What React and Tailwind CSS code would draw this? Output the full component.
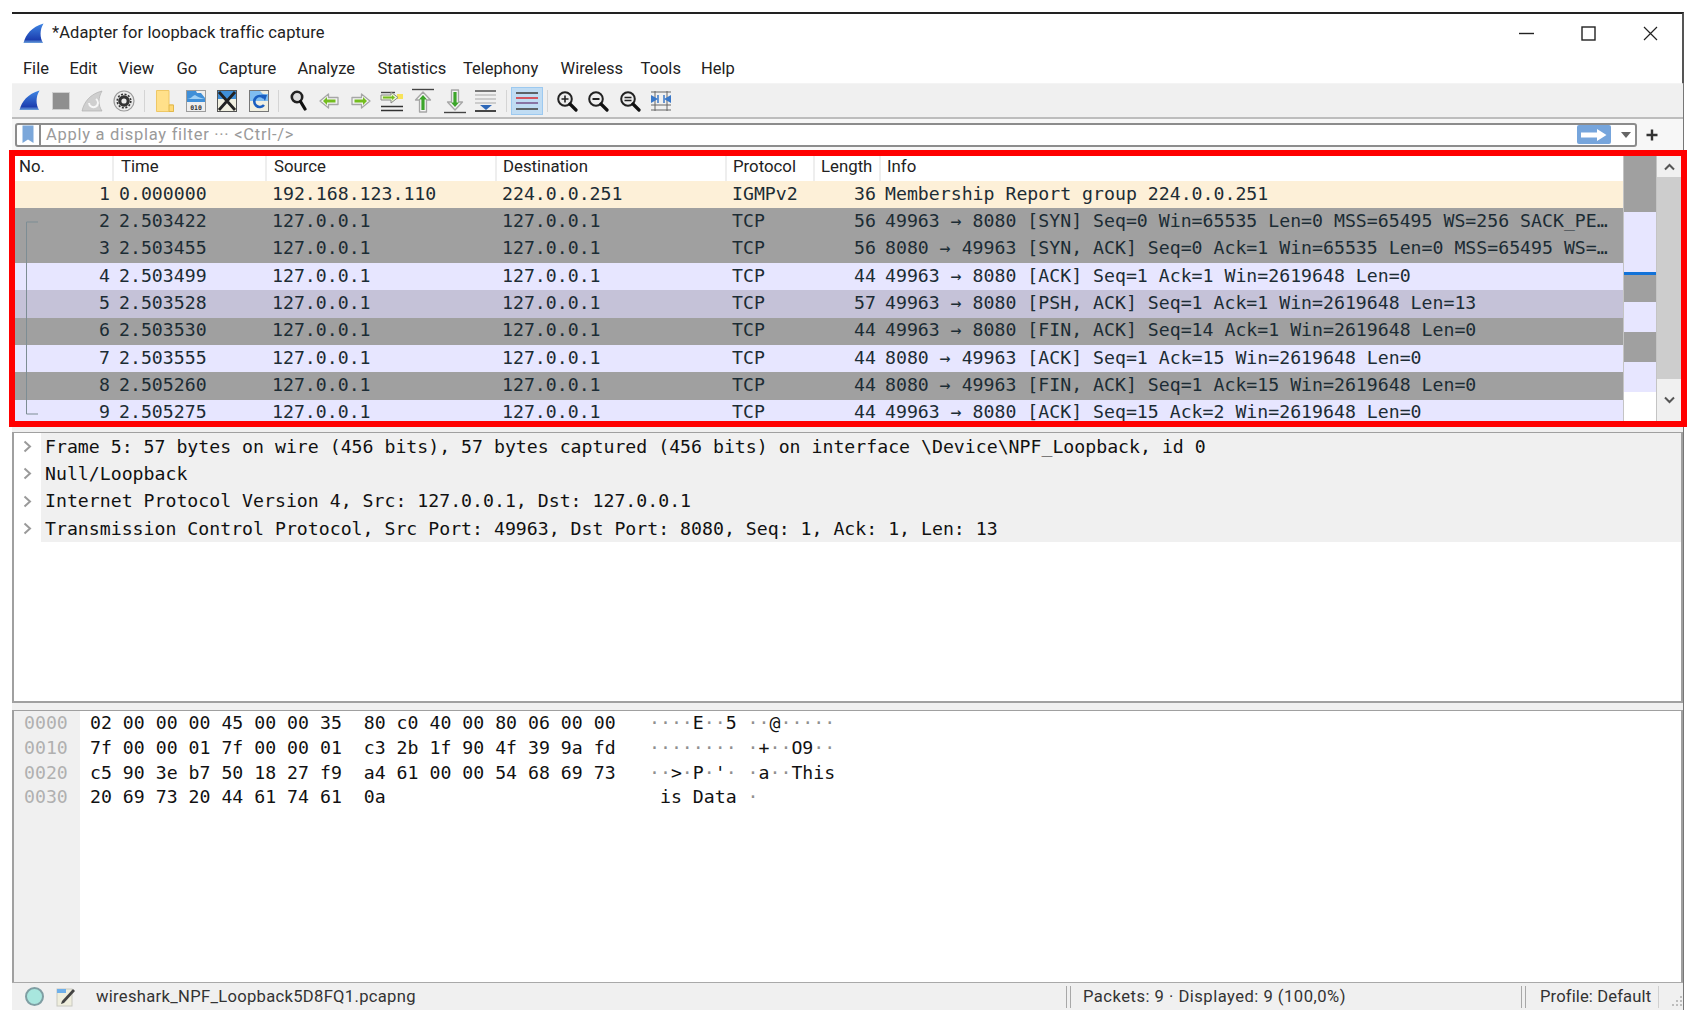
import React from "react";

const MONO = "font-['DejaVu_Sans_Mono',monospace] text-[18.2px] leading-none whitespace-pre";
const UI = "font-['Roboto',sans-serif]";

const rows = [
  ["1", "0.000000", "192.168.123.110", "224.0.0.251", "IGMPv2", "36", "Membership Report group 224.0.0.251", "bg-[#fdf0d8]"],
  ["2", "2.503422", "127.0.0.1", "127.0.0.1", "TCP", "56", "49963 → 8080 [SYN] Seq=0 Win=65535 Len=0 MSS=65495 WS=256 SACK_PE…", "bg-[#a0a0a0]"],
  ["3", "2.503455", "127.0.0.1", "127.0.0.1", "TCP", "56", "8080 → 49963 [SYN, ACK] Seq=0 Ack=1 Win=65535 Len=0 MSS=65495 WS=…", "bg-[#a0a0a0]"],
  ["4", "2.503499", "127.0.0.1", "127.0.0.1", "TCP", "44", "49963 → 8080 [ACK] Seq=1 Ack=1 Win=2619648 Len=0", "bg-[#e7e6ff]"],
  ["5", "2.503528", "127.0.0.1", "127.0.0.1", "TCP", "57", "49963 → 8080 [PSH, ACK] Seq=1 Ack=1 Win=2619648 Len=13", "bg-[#c5c2d8]"],
  ["6", "2.503530", "127.0.0.1", "127.0.0.1", "TCP", "44", "49963 → 8080 [FIN, ACK] Seq=14 Ack=1 Win=2619648 Len=0", "bg-[#a0a0a0]"],
  ["7", "2.503555", "127.0.0.1", "127.0.0.1", "TCP", "44", "8080 → 49963 [ACK] Seq=1 Ack=15 Win=2619648 Len=0", "bg-[#e7e6ff]"],
  ["8", "2.505260", "127.0.0.1", "127.0.0.1", "TCP", "44", "8080 → 49963 [FIN, ACK] Seq=1 Ack=15 Win=2619648 Len=0", "bg-[#a0a0a0]"],
  ["9", "2.505275", "127.0.0.1", "127.0.0.1", "TCP", "44", "49963 → 8080 [ACK] Seq=15 Ack=2 Win=2619648 Len=0", "bg-[#e7e6ff]"],
];

const details = [
  "Frame 5: 57 bytes on wire (456 bits), 57 bytes captured (456 bits) on interface \\Device\\NPF_Loopback, id 0",
  "Null/Loopback",
  "Internet Protocol Version 4, Src: 127.0.0.1, Dst: 127.0.0.1",
  "Transmission Control Protocol, Src Port: 49963, Dst Port: 8080, Seq: 1, Ack: 1, Len: 13",
];

const hexRows = [
  ["0000", "02 00 00 00 45 00 00 35  80 c0 40 00 80 06 00 00", "····E··5 ··@·····"],
  ["0010", "7f 00 00 01 7f 00 00 01  c3 2b 1f 90 4f 39 9a fd", "········ ·+··O9··"],
  ["0020", "c5 90 3e b7 50 18 27 f9  a4 61 00 00 54 68 69 73", "··>·P·'· ·a··This"],
  ["0030", "20 69 73 20 44 61 74 61  0a", " is Data ·"],
];

const menu = [
  ["File", "w-[46.5px]"],
  ["Edit", "w-[49px]"],
  ["View", "w-[58px]"],
  ["Go", "w-[42px]"],
  ["Capture", "w-[79px]"],
  ["Analyze", "w-[80px]"],
  ["Statistics", "w-[85.5px]"],
  ["Telephony", "w-[97.5px]"],
  ["Wireless", "w-[80px]"],
  ["Tools", "w-[60.5px]"],
  ["Help", "w-[50px]"],
];

const Fin = ({ size = 22, id }) => (
  <svg width={size} height={size} viewBox="0 0 22 22">
    <defs>
      <linearGradient id={id} x1="0" y1="0" x2="0" y2="1">
        <stop offset="0" stopColor="#3f86e4" />
        <stop offset="0.82" stopColor="#1c3fb0" />
        <stop offset="1" stopColor="#6ea4de" />
      </linearGradient>
    </defs>
    <path d="M0.5 21C3 12 9 4 21.5 0.5C17.5 7 17.5 15 21 21Z" fill={`url(#${id})`} />
  </svg>
);

const Btn = ({ children, w = "w-[31.3px]" }) => <div className={`${w} flex h-full items-center justify-center`}>{children}</div>;
const Sep = ({ w }) => (
  <div className={`${w} flex h-full items-center justify-center`}>
    <div className="h-[22px] w-px bg-[#d4d4d4]" />
  </div>
);

const Magnifier = ({ mark }) => (
  <svg width="22" height="22" viewBox="0 0 22 22">
    <circle cx="9" cy="9" r="6.8" fill="#eee" stroke="#222" strokeWidth="2" />
    <path d="M14 14L20 20" stroke="#111" strokeWidth="3.2" strokeLinecap="round" />
    {mark === "in" && <path d="M5.5 9H12.5M9 5.5V12.5" stroke="#222" strokeWidth="1.6" />}
    {mark === "out" && <path d="M5.5 9H12.5" stroke="#222" strokeWidth="2" />}
    {mark === "eq" && <path d="M5.5 7.5H12.5M5.5 10.5H12.5" stroke="#222" strokeWidth="1.5" />}
  </svg>
);

const Arrow = ({ flip }) => (
  <svg width="20" height="16" viewBox="0 0 20 16" style={flip ? { transform: "scaleX(-1)" } : undefined}>
    <path d="M1 4.5H10.5V1L19 8L10.5 15V11.5H1Z" fill="#f4f4f4" stroke="#a6a6a6" strokeWidth="1.3" strokeLinejoin="round" />
    <path d="M3.5 6.5H12V4L16 8L12 12V9.5H3.5Z" fill="#74bd1f" />
  </svg>
);

const ListIcon = () => (
  <svg width="24" height="22" viewBox="0 0 24 22">
    <path d="M1 16.5H23M1 20.5H23" stroke="#333" strokeWidth="1.5" />
    <path d="M1 2.5H15" stroke="#444" strokeWidth="1.4" />
    <path d="M17 4H23V9H17Z" fill="#f7e35a" />
    <path d="M1 5H11V2L18 7.5L11 13V10H1Z" fill="#e8f5d0" stroke="#8a8a8a" strokeWidth="1" />
    <path d="M3 6.5H12V5L15 7.5L12 10V8.5H3Z" fill="#74bd1f" />
  </svg>
);

const Vert = ({ up }) => (
  <svg width="22" height="26" viewBox="0 0 22 26">
    {up ? (
      <g>
        <path d="M0 1.5H22" stroke="#444" strokeWidth="1.4" />
        <path d="M11 4L18.5 12H14.5V24H7.5V12H3.5Z" fill="#f4f4f4" stroke="#a6a6a6" strokeWidth="1.3" strokeLinejoin="round" />
        <path d="M11 7L15 11.5H12.6V22H9.4V11.5H7Z" fill="#3ca52a" />
      </g>
    ) : (
      <g>
        <path d="M0 24.5H22" stroke="#444" strokeWidth="1.4" />
        <path d="M11 22L18.5 14H14.5V2H7.5V14H3.5Z" fill="#f4f4f4" stroke="#a6a6a6" strokeWidth="1.3" strokeLinejoin="round" />
        <path d="M11 19L15 14.5H12.6V4H9.4V14.5H7Z" fill="#3ca52a" />
      </g>
    )}
  </svg>
);

const Toolbar = () => (
  <div className="flex h-[33px] w-[1671px] items-center bg-[#f0f0f0] pl-[2px]">
    <Btn><Fin id="tb1" size={21} /></Btn>
    <Btn>
      <svg width="18" height="18" viewBox="0 0 18 18"><rect x="0.5" y="0.5" width="17" height="17" fill="#8f8f8f" stroke="#cfcfcf" /></svg>
    </Btn>
    <Btn>
      <svg width="22" height="22" viewBox="0 0 22 22">
        <path d="M1 21C3 12 9 4 21 1C17 8 17 15 21 21Z" fill="#cfcfcf" stroke="#b0b0b0" strokeWidth="0.7" />
        <path d="M15 9A4.5 4.5 0 1 1 8 13" fill="none" stroke="#f7f7f7" strokeWidth="2" />
      </svg>
    </Btn>
    <Btn>
      <svg width="22" height="22" viewBox="0 0 22 22">
        <circle cx="11" cy="11" r="10" fill="#ececec" stroke="#9a9a9a" strokeWidth="1.2" />
        <circle cx="11" cy="11" r="5.8" fill="#333" />
        <circle cx="11" cy="11" r="6.8" fill="none" stroke="#333" strokeWidth="1.6" strokeDasharray="2 1.6" />
        <circle cx="11" cy="11" r="2.6" fill="#ececec" />
      </svg>
    </Btn>
    <Sep w="w-[10px]" />
    <Btn>
      <svg width="18" height="22" viewBox="0 0 18 22">
        <path d="M0.5 0.5H13V15H17.5V21.5H0.5Z" fill="#ffe08a" stroke="#eec765" />
        <path d="M13 15H17.5V21.5H13Z" fill="#ffd976" stroke="#e0b84d" />
      </svg>
    </Btn>
    <Btn>
      <svg width="20" height="22" viewBox="0 0 20 22">
        <rect x="0.5" y="0.5" width="19" height="21" fill="#eee" stroke="#9c9c9c" />
        <path d="M1 1H10L11 3H15L19 8V12H1Z" fill="#3f8fd8" />
        <path d="M1 9C5 9 6 6 9 5C11 6 13 8 19 9" fill="#9fd0f5" />
        <text x="10" y="20" textAnchor="middle" fontFamily="'DejaVu Sans Mono',monospace" fontSize="6.5" fontWeight="700" fill="#333">010</text>
      </svg>
    </Btn>
    <Btn>
      <svg width="20" height="22" viewBox="0 0 20 22">
        <rect x="0.5" y="0.5" width="19" height="21" fill="#f0efe0" stroke="#555" />
        <path d="M1 1H19V9H1Z" fill="#3f8fd8" />
        <path d="M2 2L18 20M18 2L2 20" stroke="#222" strokeWidth="2.8" />
      </svg>
    </Btn>
    <Btn>
      <svg width="20" height="22" viewBox="0 0 20 22">
        <rect x="0.5" y="0.5" width="19" height="21" fill="#f0efe0" stroke="#777" />
        <path d="M1 1H11L14 4H19V11H1Z" fill="#7fbdf0" />
        <path d="M15 8A5.5 5.5 0 1 0 15 15" fill="none" stroke="#1a5fc0" strokeWidth="2.6" />
        <path d="M12 4.5L18 5L16 11Z" fill="#1a5fc0" />
      </svg>
    </Btn>
    <Sep w="w-[8px]" />
    <Btn>
      <svg width="17" height="22" viewBox="0 0 17 22">
        <circle cx="7" cy="7" r="5.2" fill="#ddd" stroke="#222" strokeWidth="2.6" />
        <path d="M10.5 11.5L15 19" stroke="#111" strokeWidth="3.2" strokeLinecap="round" />
      </svg>
    </Btn>
    <Btn><Arrow flip /></Btn>
    <Btn><Arrow /></Btn>
    <Btn><ListIcon /></Btn>
    <Btn><Vert up /></Btn>
    <Btn><Vert /></Btn>
    <Btn>
      <svg width="21" height="22" viewBox="0 0 21 22">
        <path d="M0 1H21" stroke="#444" strokeWidth="1.4" />
        <path d="M0 5H21M0 9H21M0 13H21" stroke="#c0c0c0" strokeWidth="1.4" />
        <path d="M0 21H21" stroke="#333" strokeWidth="1.8" />
        <path d="M5 15H17L11 20Z" fill="#2e68b8" />
      </svg>
    </Btn>
    <Sep w="w-[10px]" />
    <div className="flex h-[28px] w-[32px] items-center justify-center border border-[#9cc9f0] bg-[#c0dcf3]">
      <svg width="22" height="20" viewBox="0 0 22 20">
        <path d="M0 2H22" stroke="#444" strokeWidth="1.6" />
        <path d="M0 7H22" stroke="#d8343a" strokeWidth="1.6" />
        <path d="M0 12H22" stroke="#7a5a90" strokeWidth="1.6" />
        <path d="M0 18H22" stroke="#444" strokeWidth="1.6" />
      </svg>
    </div>
    <Sep w="w-[8px]" />
    <Btn><Magnifier mark="in" /></Btn>
    <Btn><Magnifier mark="out" /></Btn>
    <Btn><Magnifier mark="eq" /></Btn>
    <Btn>
      <svg width="20" height="20" viewBox="0 0 20 20">
        <path d="M0 1H20M0 19H20M0 14H20M4 0V20M16 0V20" stroke="#666" strokeWidth="1" />
        <path d="M0 4L7 8L0 12ZM20 4L13 8L20 12Z" fill="#3a78c8" />
        <path d="M7 4V12M13 4V12" stroke="#3a78c8" strokeWidth="1.5" />
      </svg>
    </Btn>
  </div>
);

const FilterBar = () => (
  <div className="flex h-[33px] w-[1671px] items-center border-t-2 border-[#bdbdbd] bg-[#f7f7f7] pl-[3px]">
    <div className="flex h-[24px] w-[1622px] items-center rounded-[3px] border-2 border-[#8c8c8c] bg-white">
      <div className="flex h-full w-[24px] items-center justify-center border-r-2 border-[#8c8c8c]">
        <svg width="12" height="19" viewBox="0 0 12 19"><path d="M0.5 0.5H11.5V18L6 14.5L0.5 18Z" fill="#7ba7da" /></svg>
      </div>
      <span className={`${UI} ml-[5px] pt-[1px] text-[16.5px] leading-none tracking-[0.72px] text-[#9a9a9a]`}>Apply a display filter ··· &lt;Ctrl-/&gt;</span>
      <div className="ml-auto mr-[2px] flex h-[19px] w-[34px] items-center justify-center rounded-[2px] bg-[#76a5dc]">
        <svg width="28" height="14" viewBox="0 0 28 14"><path d="M1 4.5H17V1L26.5 7L17 13V9.5H1Z" fill="#fff" /></svg>
      </div>
      <div className="flex h-full w-[22px] items-center justify-center pl-[4px]">
        <svg width="10" height="6" viewBox="0 0 10 6"><path d="M0 0H10L5 6Z" fill="#666" /></svg>
      </div>
    </div>
    <span className="ml-[9px] flex items-center">
      <svg width="12" height="12" viewBox="0 0 12 12"><path d="M6 0.5V11.5M0.5 6H11.5" stroke="#333" strokeWidth="2.4" /></svg>
    </span>
  </div>
);

const colw = ["w-[99px]", "w-[153px]", "w-[230px]", "w-[230px]", "w-[88px]", "w-[66px]", "w-[742px]"];

const PacketHeader = () => {
  const cols = [["No.", "pl-[4px]"], ["Time", "pl-[7px]"], ["Source", "pl-[7px]"], ["Destination", "pl-[6px]"], ["Protocol", "pl-[6px]"], ["Length", "pl-[6px]"], ["Info", "pl-[6px]"]];
  return (
    <div className="flex h-[25px] shrink-0 bg-white">
      {cols.map(([c, p], i) => (
        <div key={c} className={`${colw[i]} ${p} ${UI} flex items-center border-r-2 border-[#eeeeee] pb-[5px] text-[16.8px] leading-none text-[#222] last:border-r-0`}>{c}</div>
      ))}
    </div>
  );
};

const PacketRow = ({ r }) => (
  <div className={`flex h-[27.33px] shrink-0 items-center pb-[2px] text-[#1c2c34] ${r[7]} ${MONO}`}>
    <div className="w-[99px] pr-[4px] text-right">{r[0]}</div>
    <div className="w-[153px] pl-[5px]">{r[1]}</div>
    <div className="w-[230px] pl-[5px]">{r[2]}</div>
    <div className="w-[230px] pl-[5px]">{r[3]}</div>
    <div className="w-[87px] pl-[5px]">{r[4]}</div>
    <div className="w-[66px] pr-[4px] text-right">{r[5]}</div>
    <div className="w-[742px] pl-[5px]">{r[6]}</div>
  </div>
);

const mini = [
  ["h-[56px]", "bg-[#a0a0a0]"],
  ["h-[60px]", "bg-[#e7e6ff]"],
  ["h-[3px]", "bg-[#1272d8]"],
  ["h-[27px]", "bg-[#a0a0a0]"],
  ["h-[30px]", "bg-[#e7e6ff]"],
  ["h-[30px]", "bg-[#a0a0a0]"],
  ["h-[30px]", "bg-[#e7e6ff]"],
];

const PacketList = () => (
  <div className="flex h-[277px] w-[1678px] shrink-0 overflow-hidden border-[6px] border-[#ff0000] bg-white">
    <div className="relative flex h-full w-[1608px] shrink-0 flex-col overflow-hidden">
      <PacketHeader />
      {rows.map((r) => <PacketRow key={r[0]} r={r} />)}
      <svg className="absolute left-[10px] top-[65px]" width="14" height="194" viewBox="0 0 14 194">
        <path d="M13 1H1.5V193H13" fill="none" stroke="#7d8d94" strokeWidth="1" />
      </svg>
    </div>
    <div className="flex h-full w-[34px] shrink-0 flex-col border-x border-[#c4c4c4] bg-white">
      {mini.map((m, i) => <div key={i} className={`${m[0]} ${m[1]}`} />)}
    </div>
    <div className="flex h-full flex-1 flex-col bg-[#f0f0f0]">
      <div className="flex h-[21px] items-center justify-center">
        <svg width="11" height="8" viewBox="0 0 11 8"><path d="M1 6.5L5.5 2L10 6.5" fill="none" stroke="#555" strokeWidth="2" /></svg>
      </div>
      <div className="h-[202px] bg-[#cdcdcd]" />
      <div className="flex flex-1 items-center justify-center">
        <svg width="11" height="8" viewBox="0 0 11 8"><path d="M1 1.5L5.5 6L10 1.5" fill="none" stroke="#555" strokeWidth="2" /></svg>
      </div>
    </div>
  </div>
);

const Details = () => (
  <div className="flex h-[271px] w-[1671px] flex-col border-x-2 border-b-2 border-t border-[#a0a0a0] bg-white">
    {details.map((d) => (
      <div key={d} className="flex h-[27.33px] shrink-0 items-center">
        <div className="flex w-[27px] justify-center">
          <svg width="9" height="13" viewBox="0 0 9 13"><path d="M1.5 1.5L7 6.5L1.5 11.5" fill="none" stroke="#9a9a9a" strokeWidth="2" /></svg>
        </div>
        <div className={`flex h-full flex-1 items-center bg-[#f0f0f0] pl-[4px] text-[#111] ${MONO}`}>{d}</div>
      </div>
    ))}
  </div>
);

const Ascii = ({ text }) => (
  <div>
    {text.split("").map((c, i) => (
      <span key={i} className={c === "·" ? "text-[#8f8f8f]" : undefined}>{c}</span>
    ))}
  </div>
);

const Hex = () => (
  <div className="flex h-[272px] w-[1671px] border-x-2 border-t border-[#a0a0a0] bg-white">
    <div className="flex h-full w-[66px] shrink-0 flex-col bg-[#f0f0f0]">
      {hexRows.map((r) => (
        <div key={r[0]} className={`flex h-[24.7px] items-center pl-[10px] text-[#b0b0b0] ${MONO}`}>{r[0]}</div>
      ))}
    </div>
    <div className="flex flex-col">
      {hexRows.map((r) => (
        <div key={r[0]} className={`flex h-[24.7px] items-center pl-[10px] text-[#111] ${MONO}`}>
          <div className="w-[559px]">{r[1]}</div>
          <Ascii text={r[2]} />
        </div>
      ))}
    </div>
  </div>
);

const DoubleSep = () => (
  <div className="flex h-[22px] gap-[3px]">
    <div className="h-full w-px bg-[#a8a8a8]" />
    <div className="h-full w-px bg-[#a8a8a8]" />
  </div>
);

const StatusBar = () => (
  <div className={`${UI} flex h-[28px] w-[1671px] items-center border-t border-[#a9a9a9] bg-[#f0f0f0] text-[16.6px] leading-none text-[#333]`}>
    <div className="ml-[13px] h-[19px] w-[19px] rounded-full border-2 border-[#7f9ea3] bg-[#a8e6de]" />
    <svg className="ml-[12px]" width="20" height="20" viewBox="0 0 20 20">
      <rect x="1" y="2" width="15" height="17" fill="#efeedd" stroke="#c8c8c0" />
      <path d="M1 2H10V6H1Z" fill="#6fb0ea" />
      <path d="M6 14L17 2L19 4L8 16L5 17Z" fill="#444" />
    </svg>
    <span className="ml-[20px] pt-[2px] tracking-[0.3px]">wireshark_NPF_Loopback5D8FQ1.pcapng</span>
    <div className="ml-auto mr-[12px]"><DoubleSep /></div>
    <span className="w-[438px] pt-[2px] tracking-[0.48px]">Packets: 9 · Displayed: 9 (100,0%)</span>
    <div className="mr-[14px]"><DoubleSep /></div>
    <span className="w-[118px] pt-[2px] tracking-[0.12px]">Profile: Default</span>
    <div className="h-[22px] w-px bg-[#d0d0d0]" />
    <svg className="ml-[10px] mt-[8px]" width="14" height="14" viewBox="0 0 14 14">
      <path d="M11 2h2v2h-2zM7 6h2v2H7zM11 6h2v2h-2zM3 10h2v2H3zM7 10h2v2H7zM11 10h2v2h-2z" fill="#bdbdbd" />
    </svg>
  </div>
);

export default function App() {
  return (
    <div className="flex h-[1023px] w-[1697px] flex-col bg-white pl-[9px] pt-[12px]">
      <div className="ml-[3px] flex h-[40px] w-[1672px] shrink-0 items-center border-r-2 border-t-2 border-r-[#555] border-t-[#222] bg-white">
        <span className="ml-[11px] flex"><Fin id="title" size={21} /></span>
        <span className={`${UI} ml-[8px] pt-[1px] text-[16.5px] leading-none tracking-[0.1px] text-[#222]`}>*Adapter for loopback traffic capture</span>
        <div className="ml-auto flex items-center">
          <div className="flex w-[62px] justify-center">
            <svg width="15" height="15" viewBox="0 0 15 15"><path d="M0 7.5H15" stroke="#222" strokeWidth="1.4" /></svg>
          </div>
          <div className="flex w-[62px] justify-center">
            <svg width="15" height="15" viewBox="0 0 15 15"><rect x="1" y="1" width="13" height="13" fill="none" stroke="#222" strokeWidth="1.4" /></svg>
          </div>
          <div className="flex w-[63px] justify-center">
            <svg width="15" height="15" viewBox="0 0 15 15"><path d="M1 1L14 14M14 1L1 14" stroke="#222" strokeWidth="1.2" /></svg>
          </div>
        </div>
      </div>
      <div className="ml-[3px] flex h-[32px] w-[1672px] shrink-0 items-center border-b border-r-2 border-b-[#f4f4f4] border-r-[#555] bg-white pl-[11px] pt-[3px]">
        {menu.map(([m, w]) => <span key={m} className={`${UI} ${w} text-[16.5px] leading-none text-[#222]`}>{m}</span>)}
      </div>
      <div className="ml-[3px] flex w-[1672px] shrink-0 flex-col border-r border-[#777]">
        <Toolbar />
        <FilterBar />
      </div>
      <PacketList />
      <div className="ml-[3px] flex w-[1672px] flex-col gap-[7px] border-r border-[#777] bg-[#f0f0f0] pt-[5px]">
        <Details />
        <Hex />
      </div>
      <div className="ml-[3px] w-[1672px] border-r border-[#777]"><StatusBar /></div>
    </div>
  );
}
